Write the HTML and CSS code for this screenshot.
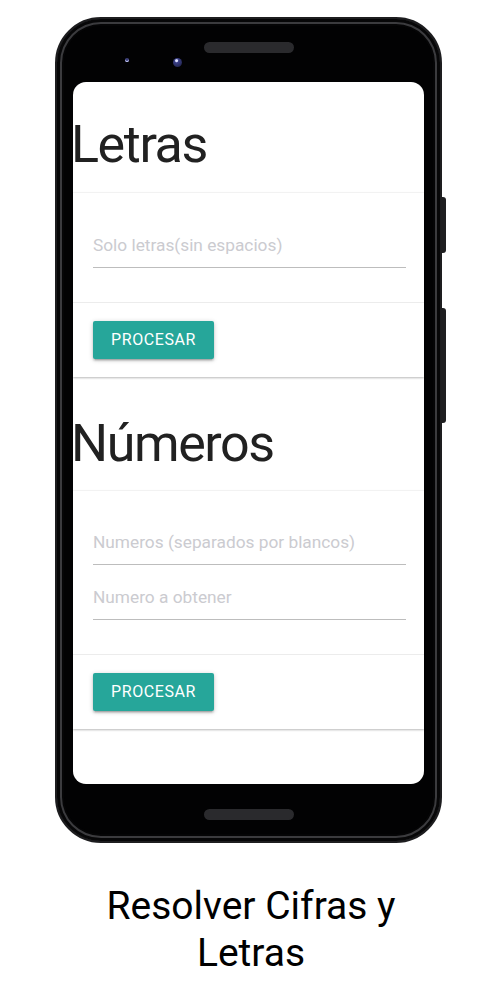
FILE: index.html
```html
<!DOCTYPE html>
<html lang="es">
<head>
<meta charset="utf-8">
<title>Resolver Cifras y Letras</title>
<link rel="stylesheet" href="styles.css">
</head>
<body>
<div class="page">
  <div class="phone">
    <span class="side-btn side-btn-power"></span>
    <span class="side-btn side-btn-volume"></span>
    <div class="bezel-top">
      <span class="cam cam-small"></span>
      <span class="cam cam-big"></span>
      <span class="speaker"></span>
    </div>
    <div class="screen">
      <h1 class="title title-first">Letras</h1>
      <div class="card">
        <div class="card-content">
          <div class="field"><span class="placeholder">Solo letras(sin espacios)</span></div>
        </div>
        <div class="card-action">
          <span class="btn">PROCESAR</span>
        </div>
      </div>
      <h1 class="title">Números</h1>
      <div class="card">
        <div class="card-content card-content-double">
          <div class="field"><span class="placeholder">Numeros (separados por blancos)</span></div>
          <div class="field"><span class="placeholder">Numero a obtener</span></div>
        </div>
        <div class="card-action">
          <span class="btn">PROCESAR</span>
        </div>
      </div>
    </div>
    <div class="bezel-bottom">
      <span class="speaker"></span>
    </div>
  </div>
  <p class="caption">Resolver Cifras y<br>Letras</p>
</div>
</body>
</html>
```

FILE: styles.css
```css
* { box-sizing: border-box; }

html, body {
  margin: 0;
  padding: 0;
  background: #ffffff;
}

body {
  font-family: Roboto, "Liberation Sans", Arial, sans-serif;
  color: #212121;
}

.page {
  display: flex;
  flex-direction: column;
  align-items: flex-start;
  padding-top: 17px;
}

.phone {
  position: relative;
  margin-left: 55px;
  width: 387px;
  height: 826px;
  border-radius: 46px;
  background: #020203;
  border: 2px solid #1d1d1f;
  box-shadow: inset 0 0 0 3px #070708, inset 0 0 0 5px #3b3b3e, inset 0 0 0 7px #050506;
  display: flex;
  flex-direction: column;
  padding: 0 16px;
}

.side-btn {
  position: absolute;
  right: -6px;
  width: 5px;
  background: #1f1f21;
  border-radius: 0 3px 3px 0;
}
.side-btn-power { top: 178px; height: 56px; }
.side-btn-volume { top: 289px; height: 115px; }

.bezel-top {
  position: relative;
  height: 63px;
  flex: none;
  display: flex;
  justify-content: center;
}

.speaker {
  display: block;
  width: 90px;
  height: 11px;
  border-radius: 6px;
  background: #2a2a2d;
  margin-top: 23px;
}

.cam {
  position: absolute;
  border-radius: 50%;
}
.cam-small {
  left: 52px;
  top: 39px;
  width: 4px;
  height: 4px;
  background: #3b3f7a;
  box-shadow: 0 -1px 0 0 #cfd2ff inset;
}
.cam-big {
  left: 100px;
  top: 39px;
  width: 9px;
  height: 9px;
  background: radial-gradient(circle at 40% 30%, #dfe3ff 0 1px, #3a3f86 2px, #1a1c3c 100%);
}

.screen {
  flex: none;
  height: 702px;
  background: #ffffff;
  border-radius: 13px;
  display: flex;
  flex-direction: column;
}

.bezel-bottom {
  flex: 1;
  display: flex;
  justify-content: center;
}
.bezel-bottom .speaker { margin-top: 25px; }

.title {
  margin: 37px 0 17px -2px;
  font-size: 52px;
  line-height: 60px;
  font-weight: 400;
  letter-spacing: -1.4px;
  color: #212121;
}
.title-first { margin-top: 33px; margin-bottom: 18px; }

.card {
  background: #ffffff;
  box-shadow: 0 1px 2px rgba(0, 0, 0, 0.28), 0 -1px 1px rgba(0, 0, 0, 0.03);
}

.card-content {
  padding: 24px 18px 34px 20px;
  display: flex;
  flex-direction: column;
  gap: 4px;
}
.card-content-double { padding-top: 23px; }

.field {
  height: 51px;
  padding-top: 18px;
  border-bottom: 1px solid #bdbdbd;
}

.placeholder {
  display: block;
  font-size: 17.3px;
  line-height: 20px;
  color: #cbcbd0;
}

.card-action {
  border-top: 1px solid rgba(160, 160, 160, 0.2);
  padding: 18px 20px 18px;
  display: flex;
}

.btn {
  display: block;
  height: 38px;
  line-height: 38px;
  padding: 0 18px;
  background: #26a69a;
  color: #ffffff;
  font-size: 16px;
  font-weight: 400;
  letter-spacing: 0.6px;
  border-radius: 2px;
  box-shadow: 0 2px 2px 0 rgba(0, 0, 0, 0.14), 0 3px 1px -2px rgba(0, 0, 0, 0.12), 0 1px 5px 0 rgba(0, 0, 0, 0.2);
}

.caption {
  align-self: stretch;
  margin: 40px 0 0;
  padding-left: 2px;
  text-align: center;
  font-size: 39px;
  line-height: 47px;
  color: #000000;
}
```
